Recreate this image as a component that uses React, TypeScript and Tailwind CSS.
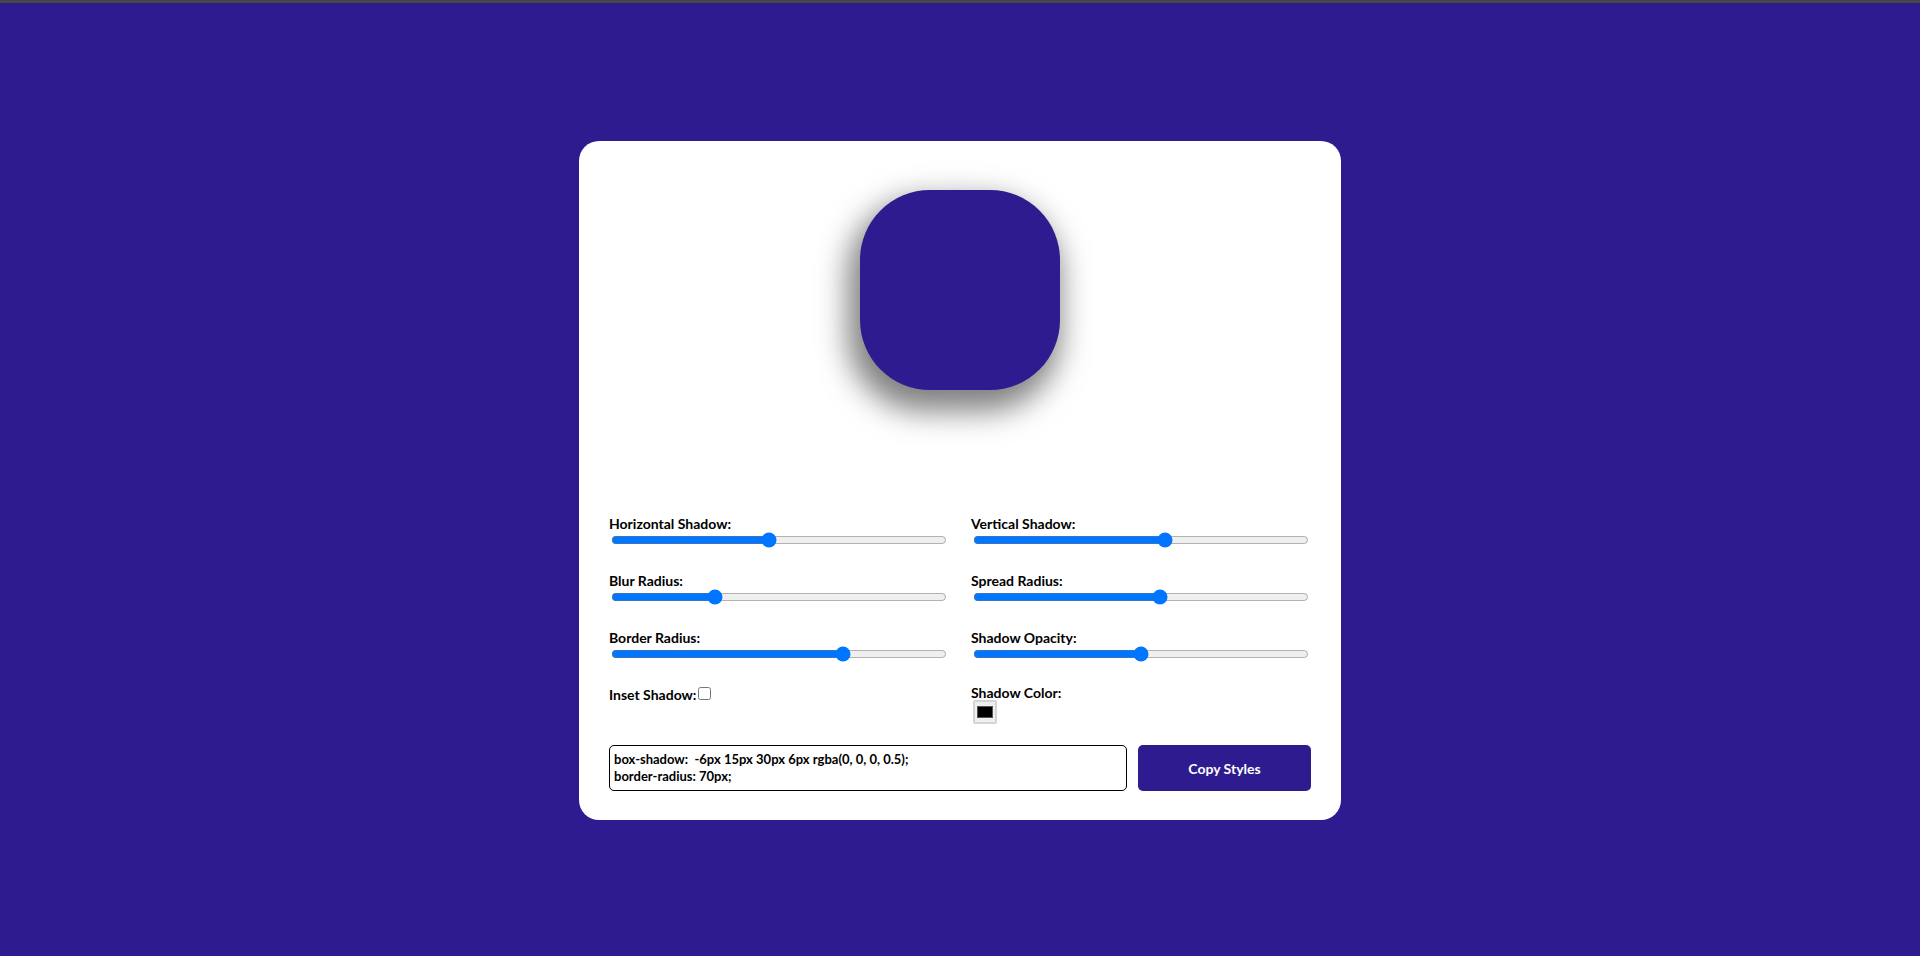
import { useState } from 'react';

interface ShadowState {
    horizontal: number;
    vertical: number;
    blur: number;
    spread: number;
    radius: number;
    opacity: number;
    inset: boolean;
    color: string;
}

const hexToRgb = (hex: string) => {
    const n = parseInt(hex.slice(1), 16);
    return [(n >> 16) & 255, (n >> 8) & 255, n & 255];
};

export default function App() {
    const [s, setS] = useState<ShadowState>({
        horizontal: -6,
        vertical: 15,
        blur: 30,
        spread: 6,
        radius: 70,
        opacity: 0.5,
        inset: false,
        color: '#000000',
    });

    const [r, g, b] = hexToRgb(s.color);
    const shadow = `${s.inset ? 'inset ' : ''}${s.horizontal}px ${s.vertical}px ${s.blur}px ${s.spread}px rgba(${r}, ${g}, ${b}, ${s.opacity})`;
    const css = `box-shadow: ${s.inset ? 'inset' : ''} ${s.horizontal}px ${s.vertical}px ${s.blur}px ${s.spread}px rgba(${r}, ${g}, ${b}, ${s.opacity});\nborder-radius: ${s.radius}px;`;

    const sliders: {
        key: keyof ShadowState;
        label: string;
        min: number;
        max: number;
        step?: number;
    }[] = [
        { key: 'horizontal', label: 'Horizontal Shadow:', min: -100, max: 100 },
        { key: 'vertical', label: 'Vertical Shadow:', min: -100, max: 100 },
        { key: 'blur', label: 'Blur Radius:', min: 0, max: 100 },
        { key: 'spread', label: 'Spread Radius:', min: -50, max: 50 },
        { key: 'radius', label: 'Border Radius:', min: 0, max: 100 },
        { key: 'opacity', label: 'Shadow Opacity:', min: 0, max: 1, step: 0.01 },
    ];

    return (
        <div className="flex min-h-screen flex-col bg-[#2e1b8f] font-['Lato',sans-serif] text-black">
            <div className="h-[3px] bg-[#474747]" />
            <div className="flex justify-center pt-[138px] pb-10">
                <div className="w-[762px] rounded-[20px] bg-white px-[30px] pt-[30px] pb-[29px]">
                    <div className="mt-[19px] mb-[125px] flex h-[200px] justify-center">
                        <div
                            className="h-[200px] w-[200px] bg-[#2e1b8f]"
                            style={{ boxShadow: shadow, borderRadius: s.radius }}
                        />
                    </div>

                    <div className="grid grid-cols-2 gap-x-[22px] gap-y-[24px]">
                        {sliders.map((sl) => (
                            <div key={sl.key} className="flex flex-col">
                                <label className="block text-[14px] leading-[17px] font-bold">
                                    {sl.label}
                                </label>
                                <input
                                    type="range"
                                    min={sl.min}
                                    max={sl.max}
                                    step={sl.step ?? 1}
                                    value={s[sl.key] as number}
                                    onChange={(e) =>
                                        setS({ ...s, [sl.key]: Number(e.target.value) })
                                    }
                                    className="mx-[2px] my-0 h-4"
                                />
                            </div>
                        ))}

                        <div>
                            <label className="flex items-center text-[14px] leading-[17px] font-bold">
                                Inset Shadow:
                                <input
                                    type="checkbox"
                                    checked={s.inset}
                                    onChange={(e) => setS({ ...s, inset: e.target.checked })}
                                    className="ml-[2px] -mt-[3px] h-[13px] w-[13px]"
                                />
                            </label>
                        </div>
                        <div className="-mt-[2px] flex flex-col">
                            <label className="block text-[14px] leading-[17px] font-bold">
                                Shadow Color:
                            </label>
                            <label className="mt-[-1px] ml-[2px] flex h-[24px] w-[24px] items-center justify-center rounded-[2px] border-2 border-[#d4d4d4] bg-[#efefef]">
                                <span
                                    className="h-[12px] w-[16px] border border-[#555]"
                                    style={{ background: s.color }}
                                />
                                <input
                                    type="color"
                                    value={s.color}
                                    onChange={(e) => setS({ ...s, color: e.target.value })}
                                    className="hidden"
                                />
                            </label>
                        </div>
                    </div>

                    <div className="mt-[21px] flex gap-[11px]">
                        <textarea
                            readOnly
                            value={css}
                            className="h-[46px] flex-1 resize-none rounded-[5px] border border-black px-[4px] py-[5px] text-[13px] leading-[17px] font-bold outline-none"
                        />
                        <button
                            type="button"
                            onClick={() => navigator.clipboard?.writeText(css)}
                            className="h-[46px] w-[173px] rounded-[5px] bg-[#2e1b8f] text-[14px] font-bold text-white"
                        >
                            Copy Styles
                        </button>
                    </div>
                </div>
            </div>
        </div>
    );
}
